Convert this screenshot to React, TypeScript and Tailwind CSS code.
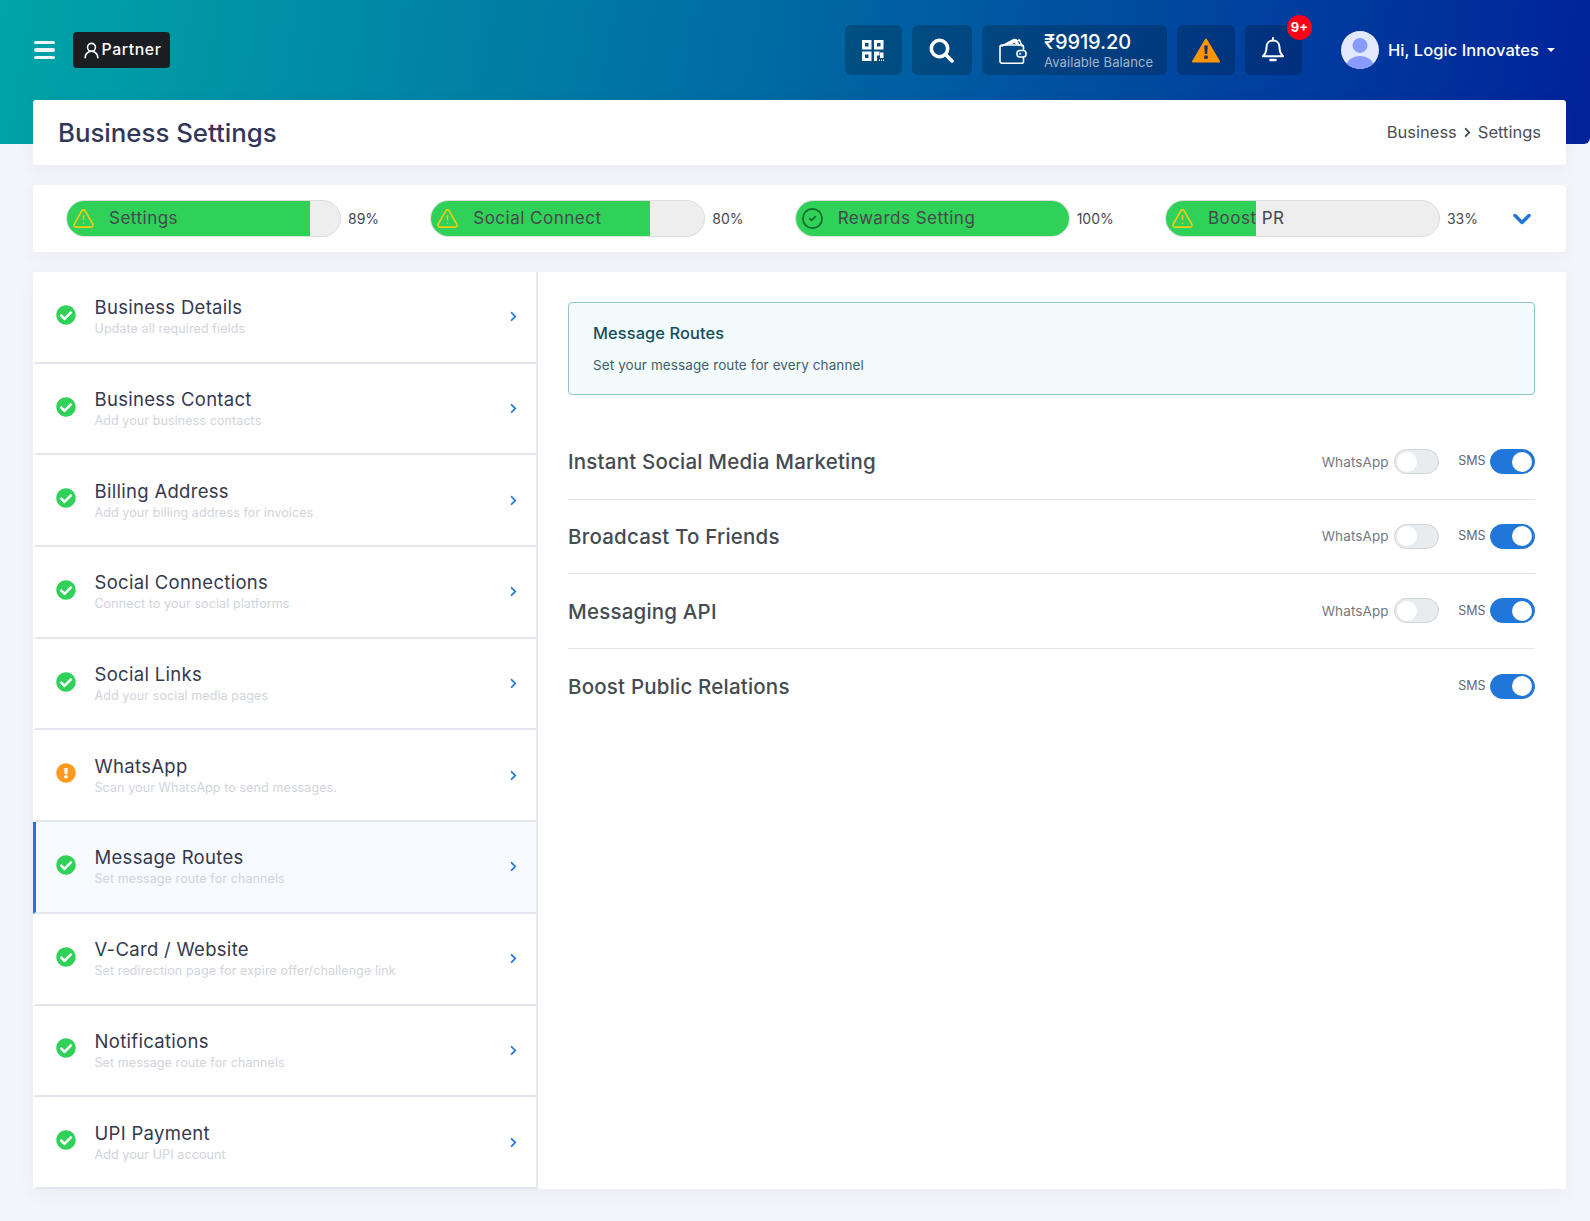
import { ChevronDown, CircleCheck, TriangleAlert, UserRound } from "lucide-react";
import { FaCheckCircle, FaChevronRight, FaExclamationCircle } from "react-icons/fa";

const progress = [
  { label: "Settings", fill: "w-[89%]", pct: "89%", done: false },
  { label: "Social Connect", fill: "w-[80%]", pct: "80%", done: false },
  { label: "Rewards Setting", fill: "w-full", pct: "100%", done: true },
  { label: "Boost PR", fill: "w-[33%]", pct: "33%", done: false },
];

const menu = [
  { title: "Business Details", sub: "Update all required fields" },
  { title: "Business Contact", sub: "Add your business contacts" },
  { title: "Billing Address", sub: "Add your billing address for invoices" },
  { title: "Social Connections", sub: "Connect to your social platforms" },
  { title: "Social Links", sub: "Add your social media pages" },
  { title: "WhatsApp", sub: "Scan your WhatsApp to send messages.", warn: true },
  { title: "Message Routes", sub: "Set message route for channels", active: true },
  { title: "V-Card / Website", sub: "Set redirection page for expire offer/challenge link" },
  { title: "Notifications", sub: "Set message route for channels" },
  { title: "UPI Payment", sub: "Add your UPI account" },
];

const routes = [
  { title: "Instant Social Media Marketing", whatsapp: true },
  { title: "Broadcast To Friends", whatsapp: true },
  { title: "Messaging API", whatsapp: true },
  { title: "Boost Public Relations", whatsapp: false },
];

function QrIcon() {
  return (
    <svg width="22" height="21" viewBox="0 0 22 21" fill="#fff">
      <path fillRule="evenodd" d="M0 0h9.5v9.5H0zM3 3v3.5h3.5V3zM12 0h9.5v9.5H12zM15 3v3.5h3.5V3zM0 11.5h9.5V21H0zM3 14.500v3.500h3.500v-3.500z" />
      <path d="M12 11.500h3V21h-3zM15 11.500h2.500v4H15zM18 12.500h3.500V18H18zM17 19.500h1V21h-1zM19 19.500h1V21h-1zM21 19.500h1V21h-1z" />
    </svg>
  );
}

function SearchIcon() {
  return (
    <svg width="25" height="25" viewBox="0 0 25 25" fill="none" stroke="#fff" strokeWidth="3.6" strokeLinecap="round">
      <circle cx="10.500" cy="10.500" r="8.200" />
      <path d="M16.500 16.500 23 23" />
    </svg>
  );
}

function WalletIcon() {
  return (
    <svg width="28" height="27" viewBox="0 0 28 27" fill="none" stroke="#fff" strokeWidth="1.6" strokeLinejoin="round" strokeLinecap="round">
      <path d="M3 9 15 2.500l2.500 4.500M7 7.500l10-5 3 6M11 7l9.500-4 2.500 6" />
      <path d="M9 6.500l6-3M14 5.500l5-2" strokeWidth="1.200" />
      <path d="M1 10c0-1.200 1-2 2-2h19.500c1.200 0 2 .8 2 2v14.500c0 1-.8 1.700-1.800 1.700H3.200c-1.200 0-2.200-1-2.200-2.200z" />
      <rect x="18" y="13.500" width="9" height="6.500" rx="2.800" fill="#024a8c" />
      <circle cx="21.200" cy="16.700" r="1" fill="#fff" stroke="none" />
    </svg>
  );
}

function BellIcon() {
  return (
    <svg width="24" height="26" viewBox="0 0 24 26" fill="none" stroke="#fff" strokeWidth="2" strokeLinecap="round" strokeLinejoin="round">
      <path d="M12 3.500c-3.900 0-6.500 3-6.500 6.800 0 4.500-1 6.500-3.500 9h20c-2.500-2.500-3.500-4.500-3.500-9 0-3.800-2.600-6.800-6.500-6.800z" />
      <path d="M12 1v2.500" />
      <path d="M9.500 23h5" strokeWidth="2.600" />
    </svg>
  );
}

function Avatar() {
  return (
    <svg width="38" height="38" viewBox="0 0 38 38">
      <defs>
        <clipPath id="av">
          <circle cx="19" cy="19" r="19" />
        </clipPath>
      </defs>
      <circle cx="19" cy="19" r="19" fill="#e3eaff" />
      <g clipPath="url(#av)" fill="#8a9bff">
        <circle cx="19" cy="14.500" r="7.500" />
        <ellipse cx="19" cy="35" rx="13.500" ry="10" />
      </g>
    </svg>
  );
}

function Toggle({ on }: { on: boolean }) {
  return (
    <div
      className={`flex h-[25px] w-[45px] items-center rounded-full border px-[2px] ${
        on ? "justify-end border-[#2176d9] bg-[#2176d9]" : "justify-start border-[#ced4da] bg-[#e9ecef]"
      }`}
    >
      <div className="h-[20px] w-[20px] rounded-full bg-white" />
    </div>
  );
}

export default function App() {
  return (
    <div className="h-[1221px] overflow-hidden bg-[#f4f5fa] font-['Inter',sans-serif]">
      {/* Top bar */}
      <header className="h-[144px] rounded-br-[6px] bg-[linear-gradient(100deg,#00a5a8_0%,#0068a3_50%,#00229a_100%)] pr-[35px] pl-[34px]">
        <div className="flex h-[100px] items-center">
          <div className="flex w-[21px] flex-col gap-[4px]">
            <div className="h-[3.5px] rounded-sm bg-[#eef6f7]" />
            <div className="h-[3.5px] rounded-sm bg-[#eef6f7]" />
            <div className="h-[3.5px] rounded-sm bg-[#eef6f7]" />
          </div>
          <div className="ml-[18px] flex h-[36px] w-[97px] items-center justify-center gap-[1px] rounded-[4px] bg-[#1a1d21] text-[15.8px] font-medium tracking-[0.6px] text-white">
            <UserRound size={19} strokeWidth={2} />
            Partner
          </div>

          <div className="ml-auto flex items-center">
            <div className="flex h-[50px] w-[57px] items-center justify-center rounded-[6px] bg-black/20">
              <QrIcon />
            </div>
            <div className="ml-[10px] flex h-[50px] w-[60px] items-center justify-center rounded-[6px] bg-black/20">
              <SearchIcon />
            </div>
            <div className="ml-[10px] flex h-[50px] w-[185px] items-center rounded-[6px] bg-black/20 pl-[17px]">
              <WalletIcon />
              <div className="ml-[17px]">
                <div className="text-[20px] leading-[25px] font-medium tracking-[-0.1px] text-white">₹9919.20</div>
                <div className="text-[13px] leading-[15px] tracking-[0.1px] text-[#a5b5ca]">Available Balance</div>
              </div>
            </div>
            <div className="ml-[10px] flex h-[50px] w-[58px] items-center justify-center rounded-[6px] bg-black/20">
              <svg width="28" height="25" viewBox="0 0 28 25">
                <path d="M14 1.500 27 23.500H1z" fill="#ff9500" stroke="#ff9500" strokeWidth="2" strokeLinejoin="round" />
                <path d="M12.200 7.500h3.600l-.6 8.500h-2.400z" fill="#17306e" />
                <circle cx="14" cy="19.200" r="1.900" fill="#17306e" />
              </svg>
            </div>
            <div className="relative ml-[10px] flex h-[50px] w-[57px] items-center justify-center rounded-[6px] bg-black/20">
              <BellIcon />
              <div className="absolute -top-[10px] -right-[10px] flex h-[25px] w-[25px] items-center justify-center rounded-full bg-[#ff0018] text-[13px] font-bold text-white">
                9+
              </div>
            </div>
            <div className="ml-[39px]">
              <Avatar />
            </div>
            <div className="ml-[9px] text-[16.5px] font-medium tracking-[0.05px] text-white">Hi, Logic Innovates</div>
            <div className="mt-[-1px] ml-[8px] h-0 w-0 border-x-[4px] border-t-[4px] border-x-transparent border-t-white" />
          </div>
        </div>
      </header>

      <main className="mt-[-44px] mr-[24px] ml-[33px]">
        {/* Title */}
        <div className="flex h-[65px] items-center justify-between rounded-[3px] bg-white pr-[25px] pl-[25px] shadow-[0_4px_16px_rgba(60,70,110,0.06)]">
          <h1 className="text-[25.8px] leading-none font-medium text-[#32375a]">Business Settings</h1>
          <div className="flex items-center text-[16.5px] text-[#495057]">
            Business
            <FaChevronRight size={11} className="mx-[5px] text-[#3c4249]" />
            Settings
          </div>
        </div>

        {/* Progress */}
        <div className="mt-[20px] flex h-[67px] items-center rounded-[3px] bg-white pr-[30px] pl-[33px] shadow-[0_4px_16px_rgba(60,70,110,0.05)]">
          <div className="flex flex-1 items-center justify-between pr-[30px]">
            {progress.map((p) => (
              <div key={p.label} className="flex items-center">
                <div className="relative h-[37px] w-[275px] overflow-hidden rounded-full border border-[#dddddd] bg-[#eeeeee]">
                  <div className={`h-full bg-[#30d158] ${p.fill}`} />
                  <div className="absolute inset-0 flex items-center pl-[5px]">
                    {p.done ? (
                      <CircleCheck size={23} strokeWidth={1.8} className="text-[#0f6b2a]" />
                    ) : (
                      <TriangleAlert size={23} strokeWidth={1.6} className="text-[#f5cb11]" />
                    )}
                    <span className="ml-[14px] text-[17px] tracking-[0.5px] text-[#45494f]">{p.label}</span>
                  </div>
                </div>
                <span className="ml-[7px] text-[14px] text-[#444a50]">{p.pct}</span>
              </div>
            ))}
          </div>
          <ChevronDown size={28} strokeWidth={3} className="text-[#2176d9]" />
        </div>

        {/* Main */}
        <div className="mt-[20px] flex h-[917px] bg-white shadow-[0_4px_16px_rgba(60,70,110,0.05)]">
          <aside className="w-[505px] shrink-0 border-r-2 border-[#e6e9f0]">
            {menu.map((m) => (
              <div
                key={m.title}
                className={`flex h-[91.7px] items-center border-b-2 border-b-[#e3e6ee] border-l-[3px] pr-[17px] pl-[20px] ${
                  m.active ? "border-l-[#2176d9] bg-[#f7fafe]" : "border-l-white"
                }`}
              >
                <div className="-mt-[4px] shrink-0">
                  {m.warn ? (
                    <FaExclamationCircle size={20} className="text-[#ff9a1f]" />
                  ) : (
                    <FaCheckCircle size={20} className="text-[#30d158]" />
                  )}
                </div>
                <div className="mt-[1px] ml-[18.5px]">
                  <div className="text-[18.5px] leading-[23px] tracking-[0.3px] text-[#35394f]">{m.title}</div>
                  <div className="text-[12.5px] leading-[19px] tracking-[0.1px] text-[#d1d4db]">{m.sub}</div>
                </div>
                <FaChevronRight size={11} className="ml-auto text-[#2176d9]" />
              </div>
            ))}
          </aside>

          <section className="flex-1 pt-[30px] pr-[31.5px] pl-[30px]">
            <div className="h-[93px] rounded-[4px] border border-[#8ec5cd] bg-[#f3fbfd] pt-[18px] pl-[24px]">
              <div className="text-[16.4px] leading-[24px] font-medium tracking-[0.1px] text-[#14505e]">Message Routes</div>
              <div className="mt-[10px] text-[13.5px] leading-[20px] tracking-[0.1px] text-[#40606a]">
                Set your message route for every channel
              </div>
            </div>

            <div className="mt-[30px]">
              {routes.map((r, i) => (
                <div
                  key={r.title}
                  className={`flex h-[74.6px] items-center justify-between ${i < 3 ? "border-b border-[#e4e5ea]" : ""}`}
                >
                  <div className="mt-[2px] text-[20.5px] font-medium tracking-[0.2px] text-[#454b52]">{r.title}</div>
                  <div className="flex items-center">
                    {r.whatsapp && (
                      <>
                        <span className="mr-[5px] text-[13.5px] tracking-[0.1px] text-[#737a82]">WhatsApp</span>
                        <Toggle on={false} />
                      </>
                    )}
                    <span className="mr-[4px] ml-[19.5px] text-[12.5px] text-[#63677a]">SMS</span>
                    <Toggle on />
                  </div>
                </div>
              ))}
            </div>
          </section>
        </div>
      </main>
    </div>
  );
}
